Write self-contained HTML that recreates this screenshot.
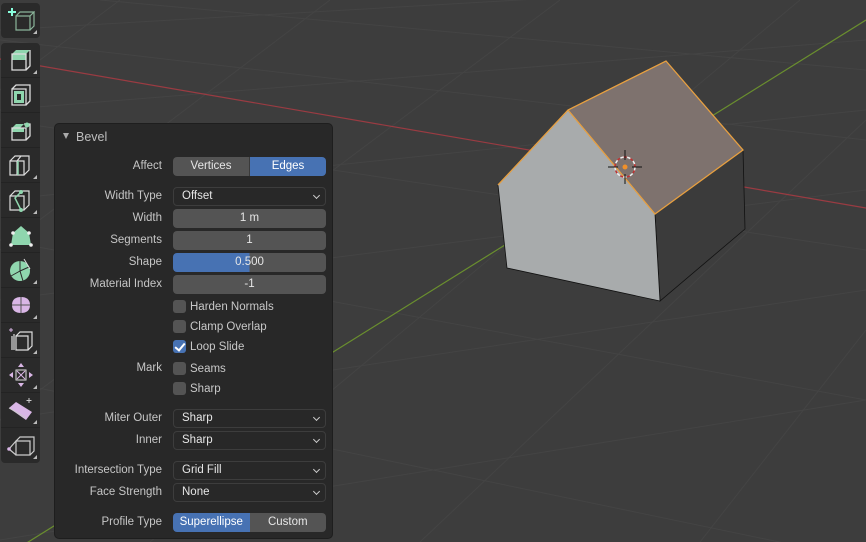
<!DOCTYPE html>
<html><head><meta charset="utf-8"><style>
body{margin:0;width:866px;height:542px;overflow:hidden;background:#3d3d3d;font-family:"Liberation Sans",sans-serif;font-size:11px;color:#d8d8d8;position:relative}
svg.bg{position:absolute;left:0;top:0}
.tb{position:absolute;left:1px;width:39px;background:#2a2a2a;border-radius:4px}
.btn{position:absolute;left:0;width:39px;height:34px;border-bottom:1px solid #232323}
.btn svg{position:absolute;left:6px;top:3px}
.btn i{position:absolute;right:3px;bottom:3px;width:0;height:0;border-left:4px solid transparent;border-bottom:4px solid #bbb}
.panel{position:absolute;left:54px;top:123px;width:279px;height:416px;background:#282828;border-radius:5px;border:1px solid #1e1e1e;box-sizing:border-box}
.t{position:absolute;font-size:12.5px;color:#bdbdbd;left:21px;top:6px}
.lab{position:absolute;right:170px;text-align:right;color:#c6c6c6;line-height:20px;white-space:nowrap;font-size:11.5px}
.w{position:absolute;left:118px;width:153px;height:19px;border-radius:4px;box-sizing:border-box;line-height:19px;color:#e6e6e6;font-size:11.5px}
.num{background:#545454;text-align:center}
.dd{background:#282828;border:1px solid #3d3d3d;padding-left:8px;line-height:17px}
.dd:after{content:"";position:absolute;right:6px;top:5px;width:4px;height:4px;border-right:1.3px solid #ccc;border-bottom:1.3px solid #ccc;transform:rotate(45deg)}
.seg{display:flex;padding:0;overflow:hidden}
.seg span{flex:1;text-align:center;background:#545454}
.seg span.on{background:#4772b3;color:#fff}
.cb{position:absolute;left:118px;height:14px;line-height:14px;padding-left:17px;color:#c8c8c8;font-size:11.5px}
.cb:before{content:"";position:absolute;left:0;top:0;width:13px;height:13px;border-radius:3px;background:#545454}
.cb.on:before{background:#4772b3}
.cb.on:after{content:"";position:absolute;left:4px;top:1px;width:4px;height:8px;border-right:2px solid #fff;border-bottom:2px solid #fff;transform:rotate(40deg)}
</style></head><body>
<svg class="bg" width="866" height="542">
<g stroke="#444" stroke-width="1" fill="none">
<path d="M0 30 L866 -20 M0 110 L866 40 M0 200 L866 110 M0 300 L866 190 M0 420 L866 290 M0 540 L866 400"/>
<path d="M120 0 L0 90 M330 0 L0 250 M560 0 L0 420 M800 0 L150 542 M866 120 L420 542 M866 330 L700 542"/>
<path d="M0 40 L866 140 M0 120 L866 250 M100 0 L866 70 M0 240 L866 400 M0 380 L866 560"/>
</g>
<line x1="0" y1="59" x2="866" y2="208" stroke="#9a3b42" stroke-width="1.2"/>
<line x1="25" y1="544" x2="866" y2="20" stroke="#6a8f2e" stroke-width="1.2"/>
<polygon points="655,214 743,150 745,229 660,301" fill="#3b3b3b" stroke="#111" stroke-width="0.8"/>
<polygon points="498,185 568,110 655,214 660,301 507,268" fill="#a8abac" stroke="#111" stroke-width="0.8"/>
<polygon points="568,110 666,61 743,150 655,214" fill="#7e726e"/>
<polyline points="498,185 568,110 666,61 743,150 655,214 568,110" fill="none" stroke="#e8a040" stroke-width="1.3"/>
<circle cx="625" cy="167" r="10" fill="none" stroke="#eee" stroke-width="1.5" stroke-dasharray="4 3"/>
<circle cx="625" cy="167" r="10" fill="none" stroke="#c03030" stroke-width="1.5" stroke-dasharray="3 4" stroke-dashoffset="3.5"/>
<path d="M625 150v10M625 174v10M608 167h10M632 167h10" stroke="#111" stroke-width="1"/>
<circle cx="625" cy="167" r="2.5" fill="#f0902a"/>
</svg>

<div class="tb" style="top:3px;height:35px"><div class="btn" style="top:0;border:0">
<svg width="28" height="28"><path d="M3 2v8M-1 6h8" stroke="#8fd" stroke-width="2" transform="translate(2,0)"/><path d="M9 10h14v14H9zM9 10l4-4h14l-4 4M27 6v14l-4 4" fill="none" stroke="#8ab59a" stroke-width="1.2"/></svg><i></i></div></div>

<div class="tb" style="top:43px;height:420px">
<div class="btn" style="top:0"><svg width="28" height="28"><path d="M5 8l4-4h14l-4 4z M5 8h14v6H5z" fill="#8fd6ae"/><path d="M5 8h14v16H5zM19 24l4-4V4" fill="none" stroke="#ddd" stroke-width="1.3"/></svg><i></i></div>
<div class="btn" style="top:35px"><svg width="28" height="28"><path d="M5 8h14v16H5zM5 8l4-4h14v16l-4 4" fill="none" stroke="#ddd" stroke-width="1.3"/><path d="M7 10h10v12H7z" fill="#8fd6ae"/><rect x="10" y="13" width="4" height="6" fill="#2a2a2a"/></svg></div>
<div class="btn" style="top:70px"><svg width="28" height="28"><path d="M5 12l4-4h8l-4 4zM5 12h12v4H5z" fill="#8fd6ae"/><path d="M5 12h14v12H5zM19 24l4-4V8h-6" fill="none" stroke="#ddd" stroke-width="1.3"/><circle cx="20" cy="9" r="2.5" fill="#8fd6ae"/></svg></div>
<div class="btn" style="top:105px"><svg width="28" height="28"><path d="M3 10h14v14H3zM3 10l5-5h14v14l-5 5M10 10v14M14 5l-4 5" fill="none" stroke="#ddd" stroke-width="1.2"/><path d="M11 10v14" stroke="#8fd6ae" stroke-width="1.5"/></svg><i></i></div>
<div class="btn" style="top:140px"><svg width="28" height="28"><path d="M3 10h14v14H3zM3 10l5-5h14v14l-5 5" fill="none" stroke="#ddd" stroke-width="1.2"/><path d="M14 6l-6 6 6 12" fill="none" stroke="#8fd6ae" stroke-width="1.5"/><circle cx="14" cy="6" r="2" fill="#8fd6ae"/><circle cx="14" cy="24" r="2" fill="#8fd6ae"/></svg><i></i></div>
<div class="btn" style="top:175px"><svg width="28" height="28"><path d="M4 24l2-12 8-7 8 7 2 12z" fill="#8fd6ae"/><g fill="#eee"><circle cx="4" cy="24" r="1.8"/><circle cx="24" cy="24" r="1.8"/><circle cx="6" cy="12" r="1.8"/><circle cx="22" cy="12" r="1.8"/></g></svg></div>
<div class="btn" style="top:210px"><svg width="28" height="28"><circle cx="13" cy="15" r="10" fill="#8fd6ae"/><path d="M13 15V5M13 15l9-4M13 15l-9 5M13 15l3 10" stroke="#2a2a2a" stroke-width="1"/><path d="M17 3l6 10" stroke="#ddd"/></svg><i></i></div>
<div class="btn" style="top:245px"><svg width="28" height="28"><path d="M5 14c0-6 4-8 9-8s9 2 9 8-4 8-9 8-9-2-9-8z" fill="#d9b6e6"/><path d="M5 14h18M14 6v16" stroke="#555"/></svg><i></i></div>
<div class="btn" style="top:280px"><svg width="28" height="28"><path d="M9 10h12v14H9zM9 10l4-4h12v14l-4 4M5 10v14M7 8v16" fill="none" stroke="#ddd" stroke-width="1.2"/><path d="M2 4h4M4 2v4" stroke="#d9b6e6"/></svg><i></i></div>
<div class="btn" style="top:315px"><svg width="28" height="28"><path d="M9 9h10v10H9z" fill="none" stroke="#ddd"/><path d="M10 10l8 8M18 10l-8 8" stroke="#d9b6e6"/><g fill="#d9b6e6"><path d="M14 2l3 4h-6zM14 26l3-4h-6zM2 14l4-3v6zM26 14l-4-3v6z"/></g></svg><i></i></div>
<div class="btn" style="top:350px"><svg width="28" height="28"><path d="M2 12l7-6 16 10-6 8z" fill="#d9b6e6"/><path d="M2 12l17 10M22 2v5M19.5 4.5h5" stroke="#ccc"/></svg><i></i></div>
<div class="btn" style="top:385px;border:0"><svg width="28" height="28"><path d="M9 10h14v14H9zM9 10l4-4h14v14l-4 4M2 18l7-8M2 18l7 6" fill="none" stroke="#ccc" stroke-width="1.2"/><circle cx="2" cy="18" r="1.8" fill="#d9b6e6"/></svg><i></i></div>
</div>

<div class="panel">
<div style="position:absolute;left:8px;top:9px;width:0;height:0;border-left:3.5px solid transparent;border-right:3.5px solid transparent;border-top:6px solid #aaa"></div>
<div class="t">Bevel</div>
<div class="lab" style="top:32px">Affect</div>
<div class="w seg" style="top:33px"><span style="border-right:1px solid #3a3a3a">Vertices</span><span class="on">Edges</span></div>
<div class="lab" style="top:62px">Width Type</div><div class="w dd" style="top:63px">Offset</div>
<div class="lab" style="top:84px">Width</div><div class="w num" style="top:85px">1 m</div>
<div class="lab" style="top:106px">Segments</div><div class="w num" style="top:107px">1</div>
<div class="lab" style="top:128px">Shape</div><div class="w num" style="top:129px;background:linear-gradient(90deg,#4772b3 50%,#545454 50%)">0.500</div>
<div class="lab" style="top:150px">Material Index</div><div class="w num" style="top:151px">-1</div>
<div class="cb" style="top:176px">Harden Normals</div>
<div class="cb" style="top:196px">Clamp Overlap</div>
<div class="cb on" style="top:216px">Loop Slide</div>
<div class="lab" style="top:234px">Mark</div>
<div class="cb" style="top:238px">Seams</div>
<div class="cb" style="top:258px">Sharp</div>
<div class="lab" style="top:284px">Miter Outer</div><div class="w dd" style="top:285px">Sharp</div>
<div class="lab" style="top:306px">Inner</div><div class="w dd" style="top:307px">Sharp</div>
<div class="lab" style="top:336px">Intersection Type</div><div class="w dd" style="top:337px">Grid Fill</div>
<div class="lab" style="top:358px">Face Strength</div><div class="w dd" style="top:359px">None</div>
<div class="lab" style="top:388px">Profile Type</div>
<div class="w seg" style="top:389px"><span class="on">Superellipse</span><span>Custom</span></div>
</div>
</body></html>
